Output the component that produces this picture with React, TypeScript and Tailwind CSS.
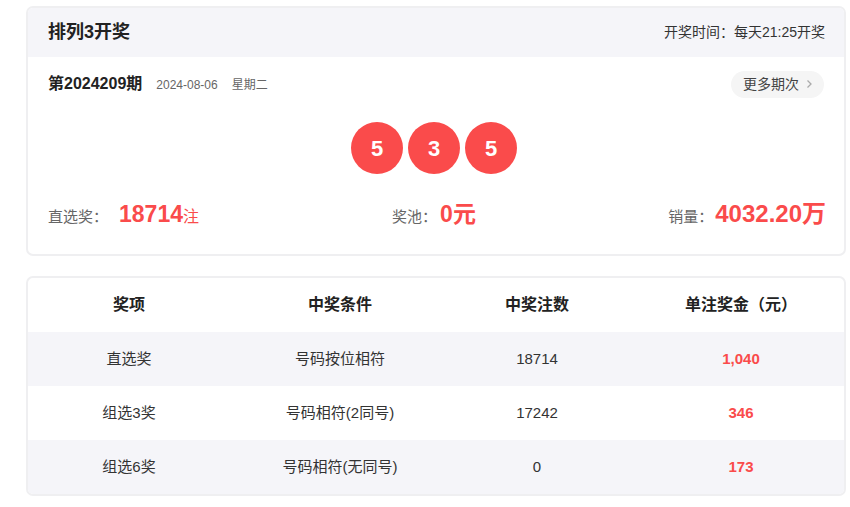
import React from "react";

const font = { fontFamily: '"Liberation Sans", "Noto Sans CJK SC", Arial, sans-serif' };

const rows = [
  { name: "直选奖", cond: "号码按位相符", count: "18714", prize: "1,040" },
  { name: "组选3奖", cond: "号码相符(2同号)", count: "17242", prize: "346" },
  { name: "组选6奖", cond: "号码相符(无同号)", count: "0", prize: "173" },
];

export default function App() {
  return (
    <div className="w-[850px] h-[507px] bg-white pt-[6px] pl-[26px] pr-[4px]" style={font}>
      <div className="w-[820px] rounded-[7px] border-2 border-[#efeff1] overflow-hidden">
        <div className="h-[49px] bg-[#f5f5f9] flex items-center justify-between pl-[20px] pr-[19px]">
          <span className="text-[18px] font-bold text-[#222]">排列3开奖</span>
          <span className="text-[14px] text-[#333]">开奖时间：每天21:25开奖</span>
        </div>
        <div className="h-[197px] px-[20px] pt-[13px]">
          <div className="flex items-center justify-between h-[28px]">
            <div className="flex items-baseline">
              <span className="text-[16px] font-bold text-[#222]">第2024209期</span>
              <span className="text-[12px] text-[#666] ml-[14px]">2024-08-06</span>
              <span className="text-[12px] text-[#666] ml-[14px]">星期二</span>
            </div>
            <div className="h-[27px] rounded-full bg-[#f5f5f5] flex items-center pl-[12px] pr-[10px] text-[14px] text-[#444]">
              更多期次
              <svg width="10" height="10" viewBox="0 0 10 10" className="ml-[5px]">
                <path d="M3.5 1.5 L7 5 L3.5 8.5" fill="none" stroke="#aaa" strokeWidth="1.3" />
              </svg>
            </div>
          </div>
          <div className="flex justify-center gap-[5px] mt-[24px] pr-[4px]">
            {["5", "3", "5"].map((n, i) => (
              <div
                key={i}
                className="w-[52px] h-[52px] rounded-full bg-[#fa4b4b] flex items-center justify-center text-white text-[22px] font-bold"
              >
                {n}
              </div>
            ))}
          </div>
          <div className="flex items-center justify-between mt-[23px] h-[34px]">
            <div className="flex items-baseline w-[300px]">
              <span className="text-[15px] text-[#666]">直选奖：</span>
              <span className="text-[23px] font-bold text-[#fa4b4b] ml-[11px]">18714</span>
              <span className="text-[16px] text-[#fa4b4b]">注</span>
            </div>
            <div className="flex items-baseline mr-[6px]">
              <span className="text-[15px] text-[#666]">奖池：</span>
              <span className="text-[23px] font-bold text-[#fa4b4b] ml-[3px]">0元</span>
            </div>
            <div className="flex items-baseline w-[300px] justify-end mr-[-2px]">
              <span className="text-[15px] text-[#666]">销量：</span>
              <span className="text-[24px] font-bold text-[#fa4b4b] ml-[2px]">4032.20万</span>
            </div>
          </div>
        </div>
      </div>

      <div className="w-[820px] mt-[20px] rounded-[7px] border-2 border-[#efeff1] overflow-hidden">
        <div className="grid grid-cols-[202px_220px_174px_1fr] h-[54px] items-center text-center text-[16px] font-bold text-[#222]">
          <div>奖项</div>
          <div>中奖条件</div>
          <div>中奖注数</div>
          <div className="pl-[14px]">单注奖金（元）</div>
        </div>
        {rows.map((r, i) => (
          <div
            key={i}
            className={`grid grid-cols-[202px_220px_174px_1fr] h-[54px] items-center text-center text-[15px] text-[#333] ${
              i % 2 === 0 ? "bg-[#f5f5f9]" : "bg-white"
            }`}
          >
            <div>{r.name}</div>
            <div>{r.cond}</div>
            <div>{r.count}</div>
            <div className="pl-[14px] font-bold text-[#fa4b4b]">{r.prize}</div>
          </div>
        ))}
      </div>
    </div>
  );
}
